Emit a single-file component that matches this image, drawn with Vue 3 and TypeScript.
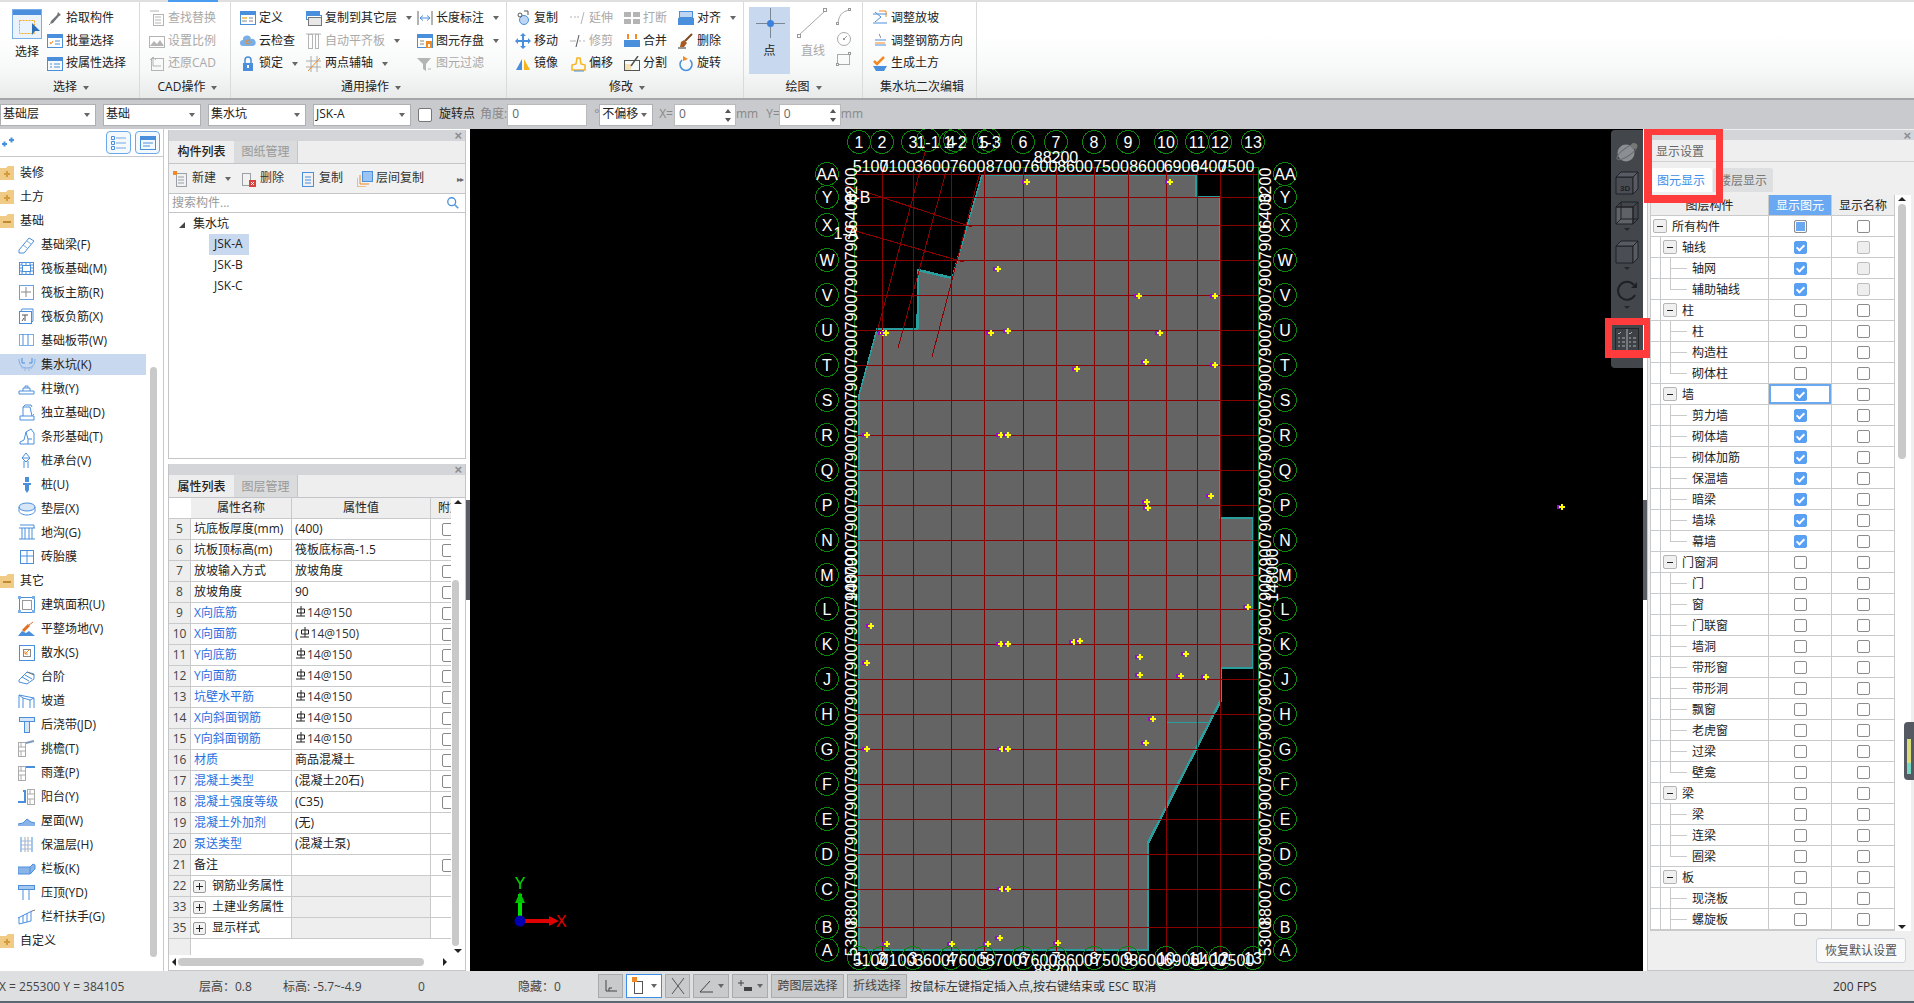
<script setup lang="ts">
const B = '#4a8fdc'
const G = '#b4b4b4'
const O = '#f08a24'
const s = (d: string, c = B, w = 1) => `<path d="${d}" fill="none" stroke="${c}" stroke-width="${w}"/>`
const f = (d: string, c = B) => `<path d="${d}" fill="${c}"/>`
const box = (x: number, y: number, w: number, h: number, c = B, fill = 'none') =>
  `<rect x="${x}.5" y="${y}.5" width="${w}" height="${h}" fill="${fill}" stroke="${c}"/>`

const icons: Record<string, string> = {
  pick: f('M11 2l3 3-2 1-6 7-3 1 1-3 6-6z', '#707478') + s('M3 14l-1 1', '#4a8fdc'),
  batch: box(0, 1, 15, 13) + f('M1 2h14v3H1z') + s('M3 9l1 2 2-3', O) + s('M8 8h5M8 11h5'),
  attr: box(0, 1, 15, 13) + f('M1 2h14v3H1z') + s('M3 8h2M7 8h6M3 11h2M7 11h6'),
  find: box(4, 4, 10, 11, G) + s('M6 7h6M6 10h6M6 13h6M1 1h9', G),
  scale: f('M1 13l4-5 3 3 3-4 4 6z', G) + box(0, 3, 15, 11, G),
  restore: box(2, 2, 12, 12, G) + s('M1 4l3-3 3 3M4 1v9h8', G),
  define: box(0, 1, 15, 13) + f('M1 2h14v3H1z') + f('M2 7h5v2H2z', '#f5c56a') + s('M9 8h4M9 11h4M2 11h5', '#888'),
  cloud: f('M3 13a3 3 0 010-6 4 4 0 018-1 3.500 3.500 0 012 7z', '#7aaee6') + `<circle cx="8" cy="9" r="2" fill="none" stroke="${O}"/>`,
  lock: s('M5 7V4a3 3 0 016 0v3', B, 1.5) + f('M3 7h10v8H3z') + f('M7 9h2v3H7z', '#fff'),
  copyto: f('M0 1h14v4H0z') + box(0, 5, 15, 4) + box(2, 7, 13, 8, '#777', '#e8e8e8'),
  align: box(2, 1, 4, 14, G) + box(9, 1, 3, 14, G) + s('M0 1h15', G),
  twopoint: s('M0 5h15M0 11h15M5 0v16M11 0v16', '#aaa') + s('M2 15L14 2', O),
  dim: s('M1 1v14M15 1v14', '#666') + s('M3 8h10M3 8l3-2.500M3 8l3 2.500M13 8l-3-2.500M13 8l-3 2.500', B),
  save: box(0, 1, 15, 13) + f('M1 2h14v3H1z') + s('M3 8h4M3 11h4', '#888') + f('M9 8h6v7H9z', O) + f('M11 11h2v3h-2z', '#fff'),
  filter: f('M0 2h14L9 8v7l-3-2V8z', G) + s('M11 13h3', G),
  copy: `<circle cx="9" cy="10" r="4.500" fill="#bcd6f3" stroke="${B}"/><circle cx="5" cy="5" r="2" fill="none" stroke="#555"/>` + s('M9 1h4v4', '#555'),
  move: s('M8 2v12M2 8h12', B, 2) + f('M8 0l3 3H5zM8 16l3-3H5zM0 8l3-3v6zM16 8l-3-3v6z'),
  mirror: f('M1 14L7 3v11z') + f('M9 3l6 11H9z', '#f6b51e'),
  extend: s('M0 7h2M4 7h2M7 7h2M14 2l-3 12', G),
  trim: s('M0 8h6', G) + s('M9 8h2M13 8h2', G) + s('M9 2L6 14', '#555'),
  offset: s('M2 14V9l4-1 1-6h3l1 6 4 1v5z', '#f6b51e', 1.5) + s('M4 15h10', B),
  break: f('M0 2h7v5H0zM9 2h7v5H9zM0 9h7v5H0zM9 9h7v5H9z', G),
  merge: f('M0 7h16v7H0z', B) + f('M3 1h2v5H3zM11 1h2v5h-2z', O),
  split: box(0, 4, 15, 10, '#555') + f('M1 8h6v6H1z', '#f6e2b8') + s('M14 0L7 10', '#555', 1.5),
  alignr: box(1, 1, 13, 6, B, '#bcd6f3') + f('M0 8h16v7H0z'),
  del: s('M14 1L7 8', '#7a4a20', 2) + f('M3 9l3-2 3 3-3 4H2z', '#a85a22') + s('M0 15h8', '#333'),
  rotate: `<path d="M12 4a6 6 0 11-8 0" fill="none" stroke="${B}" stroke-width="1.500"/>` + f('M5 0l5 3-5 2z', O),
  slope: s('M1 4h14M1 13h14', B) + s('M3 2l6 5-6 5', B) + s('M7 1h7v6', O),
  direction: s('M3 7h11M3 12h11', B) + s('M8 1c-2 1 2 3 0 4', '#777') + s('M3 10h10', O),
  earth: s('M2 5l3 3 7-7', O, 2.5) + f('M1 10h14l-3 5H4z', B),
  newdoc: box(3, 2, 10, 13, '#9aa0a6') + s('M5 6h6M5 9h6M5 12h6', '#9aa0a6') + f('M0 0h4v4H0z', O),
  delete: box(1, 2, 8, 12, '#9aa0a6') + f('M8 9h7v7H8z', '#d8443c') + s('M10 11l3 3M13 11l-3 3', '#fff'),
  copydoc: box(2, 1, 11, 14) + s('M5 6h6M5 9h6M5 12h6'),
  floorcopy: f('M6 0h10v10H6z', '#9cc4f2') + box(5, 0, 10, 10) + s('M3 4v9h9M0 7v9h9', O),
  search: `<circle cx="6.500" cy="6.500" r="4.500" fill="none" stroke="${B}" stroke-width="1.500"/>` + s('M10 10l4 4', '#5aa0e0', 2),
  beam: s('M1 14L11 2l5 3L6 17H1z') + s('M5 9l4 3M9 5l4 3', '#7aaee6'),
  raft: box(1, 2, 14, 12) + box(4, 5, 8, 6) + s('M1 5h3M1 8h3M1 11h3M12 5h3M12 8h3M12 11h3M4 2v3M8 2v3M12 2v3M4 11v3M8 11v3M12 11v3'),
  main: box(1, 1, 14, 14, '#6aa0dc') + s('M8 3v10M3 8h10', '#888'),
  neg: box(1, 3, 12, 12) + s('M3 3l1-2h11v12l-2 2') + s('M4 7h6M7 7v6M4 13l2-3', '#555'),
  strip: box(1, 2, 14, 11, '#7aaee6') + s('M5 2v11M10 2v11', B),
  pit: s('M1 3c0 6 3 9 8 9s8-3 8-9', '#7aaee6') + s('M4 2v5h3M14 2v5h-3') + s('M3 10l2 3M7 12v3M11 12v3M15 10l-2 3', '#9db9dc'),
  pier: s('M1 14h15v-3H1zM5 11V8h7v3') + s('M7 8V6h3v2'),
  ind: s('M2 16v-4h14v4zM5 12V3h7l2 9M5 3l2-2h6l1 2') + s('M14 12l2-2', '#6aa0dc'),
  stripf: s('M2 16h14V5l-3-4-5 3-2 8-4 2zM8 4l2 7h4') + s('M10 11v5'),
  cap: s('M8 1l4 5-4 4-4-4zM6 9v7M10 9v7M4 6h8'),
  pile: f('M7 1h4v5H7zM5 7h8v2H5zM7 9h4v5l-2 3-2-3z'),
  pad: `<ellipse cx="9" cy="7" rx="8" ry="4" fill="#d7e6f7" stroke="${B}"/>` + s('M1 7v4c0 2 4 4 8 4s8-2 8-4V7'),
  ditch: s('M1 4h16M2 1h14v3M4 4v11M14 4v11M7 4v11M11 4v11M1 15h16'),
  brick: box(2, 2, 13, 13) + s('M9 2v13M2 8h13'),
  area: box(1, 1, 15, 15) + box(4, 4, 9, 9, '#999') + f('M0 0h3v3H0zM14 0h3v3h-3zM0 14h3v3H0zM14 14h3v3h-3z', '#7aaee6'),
  level: f('M0 16l4-5 4 2 3-2 6 5z') + s('M5 11l6-6', '#e0701f', 3) + s('M11 5l4-3', '#e0701f'),
  apron: box(1, 1, 15, 15) + box(5, 5, 7, 7, '#888') + s('M11 6l-4 4M7 7v3h3', O),
  step: s('M1 12l8-8 7 2v5l-7 5-8-2zM4 9l7 4M7 7l7 4') + s('M9 4l7 3', '#777'),
  ramp: s('M1 16V3l15 3v10M5 16V6l7 2v8M1 3l4 3M16 6l-4 2'),
  post: box(1, 1, 15, 4, B, '#d7e6f7') + box(6, 5, 5, 11, B, '#d7e6f7'),
  eave: box(0, 2, 7, 14, '#aaa') + s('M0 7h7M0 11h7M3 2v5M3 11v5', '#aaa') + s('M8 3l8-2', '#7a9bc0', 2),
  canopy: box(0, 2, 7, 14, '#aaa') + s('M0 7h7M0 11h7M3 2v5M3 11v5', '#aaa') + s('M8 3h9', B, 2),
  balcony: box(9, 1, 7, 15, '#aaa') + s('M9 6h7M9 11h7M12 1v5M12 11v5', '#aaa') + s('M0 14h8M7 3v11M5 3h3', B, 2),
  roof: f('M0 12l5-1 4-4 4 3 4 1v3H0z', '#8ab4e8') + s('M0 12l5-1 4-4 4 3 4 1'),
  insulate: s('M3 1v15M14 1v15', B) + s('M7 1v15M10 1v15', '#aaa') + s('M3 5h11M3 9h11M3 13h11', '#9db9dc'),
  board: f('M0 7h12l3-3 2 1v4l-4 5H0z', '#8ab4e8') + s('M0 7h12v7H0zM12 7l3-3 2 1v4l-5 5'),
  coping: box(0, 1, 16, 4, B, '#a6c8ef') + s('M5 5v11M11 5v11'),
  rail: s('M0 10l14-7M1 16V9M5 15V7M9 14V5M13 13V3M1 16l12-3') + s('M14 3l3-1', '#777'),
}

const ribbon = [
  {
    label: '选择', caret: true, w: 140, pad: 7,
    cols: [
      { w: 40, big: { icon: 'select', text: '选择', active: false } },
      { w: 92, items: [{ icon: 'pick', text: '拾取构件' }, { icon: 'batch', text: '批量选择' }, { icon: 'attr', text: '按属性选择' }] },
    ],
  },
  {
    label: 'CAD操作', caret: true, w: 91, pad: 9,
    cols: [{ w: 80, items: [{ icon: 'find', text: '查找替换', off: true }, { icon: 'scale', text: '设置比例', off: true }, { icon: 'restore', text: '还原CAD', off: true }] }],
  },
  {
    label: '通用操作', caret: true, w: 276, pad: 9,
    cols: [
      { w: 66, items: [{ icon: 'define', text: '定义' }, { icon: 'cloud', text: '云检查' }, { icon: 'lock', text: '锁定', arrow: true }] },
      { w: 111, items: [{ icon: 'copyto', text: '复制到其它层', arrow: true }, { icon: 'align', text: '自动平齐板', off: true, arrow: true }, { icon: 'twopoint', text: '两点辅轴', arrow: true }] },
      { w: 89, items: [{ icon: 'dim', text: '长度标注', arrow: true }, { icon: 'save', text: '图元存盘', arrow: true }, { icon: 'filter', text: '图元过滤', off: true }] },
    ],
  },
  {
    label: '修改', caret: true, w: 237, pad: 8,
    cols: [
      { w: 55, items: [{ icon: 'copy', text: '复制' }, { icon: 'move', text: '移动' }, { icon: 'mirror', text: '镜像' }] },
      { w: 54, items: [{ icon: 'extend', text: '延伸', off: true }, { icon: 'trim', text: '修剪', off: true }, { icon: 'offset', text: '偏移' }] },
      { w: 54, items: [{ icon: 'break', text: '打断', off: true }, { icon: 'merge', text: '合并' }, { icon: 'split', text: '分割' }] },
      { w: 65, items: [{ icon: 'alignr', text: '对齐', arrow: true }, { icon: 'del', text: '删除' }, { icon: 'rotate', text: '旋转' }] },
    ],
  },
  {
    label: '绘图', caret: true, w: 119, pad: 5,
    cols: [
      { w: 41, big: { icon: 'point', text: '点', active: true } },
      { w: 46, big: { icon: 'line', text: '直线', active: false, off: true } },
      { w: 22, minis: ['arc', 'circle', 'rect'] },
    ],
  },
  {
    label: '集水坑二次编辑', caret: false, w: 114, pad: 9,
    cols: [{ w: 104, items: [{ icon: 'slope', text: '调整放坡' }, { icon: 'direction', text: '调整钢筋方向' }, { icon: 'earth', text: '生成土方' }] }],
  },
]

const selects = [
  { text: '基础层', w: 96 },
  { text: '基础', w: 98 },
  { text: '集水坑', w: 98 },
  { text: 'JSK-A', w: 98 },
]

const nav = [
  { t: '装修', folder: 'plus' },
  { t: '土方', folder: 'plus' },
  { t: '基础', folder: 'minus' },
  { t: '基础梁(F)', i: 'beam' },
  { t: '筏板基础(M)', i: 'raft' },
  { t: '筏板主筋(R)', i: 'main' },
  { t: '筏板负筋(X)', i: 'neg' },
  { t: '基础板带(W)', i: 'strip' },
  { t: '集水坑(K)', i: 'pit', sel: true },
  { t: '柱墩(Y)', i: 'pier' },
  { t: '独立基础(D)', i: 'ind' },
  { t: '条形基础(T)', i: 'stripf' },
  { t: '桩承台(V)', i: 'cap' },
  { t: '桩(U)', i: 'pile' },
  { t: '垫层(X)', i: 'pad' },
  { t: '地沟(G)', i: 'ditch' },
  { t: '砖胎膜', i: 'brick' },
  { t: '其它', folder: 'minus' },
  { t: '建筑面积(U)', i: 'area' },
  { t: '平整场地(V)', i: 'level' },
  { t: '散水(S)', i: 'apron' },
  { t: '台阶', i: 'step' },
  { t: '坡道', i: 'ramp' },
  { t: '后浇带(JD)', i: 'post' },
  { t: '挑檐(T)', i: 'eave' },
  { t: '雨蓬(P)', i: 'canopy' },
  { t: '阳台(Y)', i: 'balcony' },
  { t: '屋面(W)', i: 'roof' },
  { t: '保温层(H)', i: 'insulate' },
  { t: '栏板(K)', i: 'board' },
  { t: '压顶(YD)', i: 'coping' },
  { t: '栏杆扶手(G)', i: 'rail' },
  { t: '自定义', folder: 'plus' },
]

const props = [
  { n: 5, k: '坑底板厚度(mm)', v: '(400)', c: true },
  { n: 6, k: '坑板顶标高(m)', v: '筏板底标高-1.5', c: true },
  { n: 7, k: '放坡输入方式', v: '放坡角度', c: true },
  { n: 8, k: '放坡角度', v: '90', c: true },
  { n: 9, k: 'X向底筋', v: '14@150', c: true, blue: true, bar: true },
  { n: 10, k: 'X向面筋', v: '14@150)', c: true, blue: true, bar: true, open: true },
  { n: 11, k: 'Y向底筋', v: '14@150', c: true, blue: true, bar: true },
  { n: 12, k: 'Y向面筋', v: '14@150', c: true, blue: true, bar: true },
  { n: 13, k: '坑壁水平筋', v: '14@150', c: true, blue: true, bar: true },
  { n: 14, k: 'X向斜面钢筋', v: '14@150', c: true, blue: true, bar: true },
  { n: 15, k: 'Y向斜面钢筋', v: '14@150', c: true, blue: true, bar: true },
  { n: 16, k: '材质', v: '商品混凝土', c: true, blue: true },
  { n: 17, k: '混凝土类型', v: '(混凝土20石)', c: true, blue: true },
  { n: 18, k: '混凝土强度等级', v: '(C35)', c: true, blue: true },
  { n: 19, k: '混凝土外加剂', v: '(无)', blue: true },
  { n: 20, k: '泵送类型', v: '(混凝土泵)', blue: true },
  { n: 21, k: '备注', v: '', c: true },
  { n: 22, k: '钢筋业务属性', v: '', group: true },
  { n: 33, k: '土建业务属性', v: '', group: true },
  { n: 35, k: '显示样式', v: '', group: true },
]

type Layer = { t: string; lv: number; on?: string; dis?: boolean; last?: boolean }
const leaf = (t: string, on?: string, dis?: boolean, last?: boolean): Layer => ({ t, lv: 2, on, dis, last })
const layers: Layer[] = [
  { t: '所有构件', lv: 0, on: 'part' },
  { t: '轴线', lv: 1, on: 'yes', dis: true },
  leaf('轴网', 'yes', true),
  leaf('辅助轴线', 'yes', true, true),
  { t: '柱', lv: 1 },
  leaf('柱'),
  leaf('构造柱'),
  leaf('砌体柱', undefined, false, true),
  { t: '墙', lv: 1, on: 'focus' },
  ...['剪力墙', '砌体墙', '砌体加筋', '保温墙', '暗梁', '墙垛'].map((t) => leaf(t, 'yes')),
  leaf('幕墙', 'yes', false, true),
  { t: '门窗洞', lv: 1 },
  ...['门', '窗', '门联窗', '墙洞', '带形窗', '带形洞', '飘窗', '老虎窗', '过梁'].map((t) => leaf(t)),
  leaf('壁龛', undefined, false, true),
  { t: '梁', lv: 1 },
  leaf('梁'),
  leaf('连梁'),
  leaf('圈梁', undefined, false, true),
  { t: '板', lv: 1 },
  leaf('现浇板'),
  leaf('螺旋板'),
]

const xLines = [859, 882, 913, 951, 984, 1023, 1056, 1094, 1128, 1166, 1197, 1220, 1253]
const xNames = ['1', '2', '3', '4', '5', '6', '7', '8', '9', '10', '11', '12', '13']
const xDims = ['5100', '7100', '3600', '7600', '8700', '7600', '8600', '7500', '8600', '6900', '6400', '7500']
const yRows: [string, number][] = [
  ['AA', 174], ['Y', 197], ['X', 225], ['W', 260], ['V', 295], ['U', 330], ['T', 365], ['S', 400], ['R', 435], ['Q', 470],
  ['P', 505], ['N', 540], ['M', 575], ['L', 609], ['K', 644], ['J', 679], ['H', 714], ['G', 749], ['F', 784], ['E', 819],
  ['D', 854], ['C', 889], ['B', 927], ['A', 950],
]
const yDims = yRows.slice(0, -1).map((r, i) => ({
  y: (r[1] + yRows[i + 1][1]) / 2,
  t: i === 0 ? '3200' : i === 1 ? '6400' : i === yRows.length - 2 ? '5300' : i === yRows.length - 3 ? '8800' : '7900',
}))
const midDims = xLines.slice(0, -1).map((x, i) => ({ x: (x + xLines[i + 1]) / 2, t: xDims[i] }))
const slabOutline = '982,175 1196,175 1196,197 1220,197 1220,518 1253,518 1253,668 1221,668 1221,700 1148,843 1148,950 859,950 859,395 877,329 917,329 918,270 952,278'
const extraCircles: [number, string][] = [[928, '1-1'], [955, '1-2'], [989, '1-3']]
const marks = [
  [1026, 182], [1169, 182], [997, 269], [1138, 296], [1214, 296], [882, 333], [885, 333], [990, 333], [1007, 331], [1159, 333],
  [1145, 362], [1214, 365], [1076, 369], [866, 435], [1000, 435], [1007, 435], [1146, 502], [1147, 508], [1210, 496], [1247, 607],
  [870, 626], [1000, 644], [1007, 644], [1073, 642], [1079, 641], [866, 663], [1139, 657], [1185, 654], [1139, 675], [1180, 676],
  [1205, 677], [1152, 719], [1145, 743], [866, 749], [1001, 749], [1007, 749], [1001, 889], [1007, 889], [886, 944], [951, 944],
  [987, 944], [999, 938], [1057, 943], [1561, 507],
]
const viewIcons = ['sphere', 'cube3d', 'wire', 'solid', 'orbit']
</script>

<template>
  <div class="app">
    <header class="ribbon">
      <span class="tab-mark"></span>
      <section v-for="g in ribbon" :key="g.label" class="group" :style="{ width: g.w + 'px', paddingLeft: g.pad + 'px' }">
        <div class="group-body">
          <div v-for="(col, ci) in g.cols" :key="ci" class="col" :style="{ width: col.w + 'px' }">
            <div v-if="col.big" class="big" :class="{ active: col.big.active, off: col.big.off }">
              <svg v-if="col.big.icon === 'select'" class="big-icon sel-icon" width="30" height="30" viewBox="0 0 30 30">
                <rect x="0.500" y="0.500" width="29" height="29" fill="#eaf2fb" stroke="#7aaee6" />
                <rect x="1" y="1" width="28" height="5" fill="#4a8fdc" />
                <rect x="7.500" y="11.500" width="15" height="13" fill="none" stroke="#f6a81e" stroke-dasharray="2 1" />
                <path d="M20 14l8 8h-5l-3 4z" fill="#2f6fb5" />
              </svg>
              <svg v-else-if="col.big.icon === 'point'" class="big-icon" width="34" height="32" viewBox="0 0 34 32">
                <path d="M17.500 1v30M3 16.500h29" stroke="#7c8794" fill="none" />
                <circle cx="17.500" cy="16.500" r="3.500" fill="#3c82dc" />
              </svg>
              <svg v-else class="big-icon" width="34" height="32" viewBox="0 0 34 32">
                <path d="M3 28L29 4" stroke="#a9a9a9" fill="none" />
                <rect x="1.500" y="27.500" width="3" height="3" fill="#fff" stroke="#999" />
                <rect x="27.500" y="1.500" width="3" height="3" fill="#fff" stroke="#999" />
              </svg>
              <span>{{ col.big.text }}</span>
            </div>
            <div v-else-if="col.minis" class="minis">
              <svg width="16" height="18" viewBox="0 0 16 18"><path d="M2 17C2 8 6 3 14 2" fill="none" stroke="#aaa" /><rect x="0.500" y="14.500" width="2" height="2" fill="#fff" stroke="#999" /><rect x="12.500" y="0.500" width="2" height="2" fill="#fff" stroke="#999" /></svg>
              <svg width="16" height="16" viewBox="0 0 16 16"><circle cx="8" cy="8" r="6.500" fill="none" stroke="#aaa" /><path d="M8 8l3-3" stroke="#999" /><rect x="7" y="7" width="2" height="2" fill="#999" /></svg>
              <svg width="16" height="14" viewBox="0 0 16 14"><rect x="1.500" y="2.500" width="12" height="10" fill="none" stroke="#aaa" /><rect x="0.500" y="11.500" width="2" height="2" fill="#fff" stroke="#999" /><rect x="12.500" y="0.500" width="2" height="2" fill="#fff" stroke="#999" /></svg>
            </div>
            <template v-else>
              <div v-for="it in col.items" :key="it.text" class="rb-item" :class="{ off: it.off }">
                <svg width="16" height="16" viewBox="0 0 16 16" v-html="icons[it.icon]"></svg>
                <span>{{ it.text }}</span>
                <i v-if="it.arrow" class="caret"></i>
              </div>
            </template>
          </div>
        </div>
        <div class="group-label">{{ g.label }}<i v-if="g.caret" class="caret"></i></div>
      </section>
    </header>

    <div class="optbar">
      <div v-for="sel in selects" :key="sel.w + sel.text" class="select" :style="{ width: sel.w + 'px' }">
        <span>{{ sel.text }}</span><i class="caret"></i>
      </div>
      <span class="chk"></span>
      <span class="opt-on">旋转点</span>
      <span class="opt-off angle">角度:</span>
      <span class="input angle-in">0</span>
      <span class="opt-off deg">°</span>
      <div class="select offset-sel"><span>不偏移</span><i class="caret"></i></div>
      <span class="opt-off xl">X=</span>
      <span class="input spin">0<b class="spinner"></b></span>
      <span class="opt-off">mm</span>
      <span class="opt-off yl">Y=</span>
      <span class="input spin">0<b class="spinner"></b></span>
      <span class="opt-off">mm</span>
    </div>

    <main class="main">
      <aside class="nav">
        <div class="nav-head">
          <svg class="nav-star" width="14" height="12" viewBox="0 0 14 12">
            <path d="M1 7h5M3.500 4.500v5M8 3h5M10.500 0.500v5" stroke="#4a8fdc" stroke-width="2" fill="none" />
          </svg>
          <span class="nav-btn">
            <svg width="16" height="14" viewBox="0 0 16 14"><path d="M5 2h10M5 7h10M5 12h10" stroke="#7aa7dc" fill="none" /><path d="M0.500 0.500h3v3h-3zM0.500 5.500h3v3h-3zM0.500 10.500h3v3h-3z" stroke="#4a8fdc" fill="none" /></svg>
          </span>
          <span class="nav-btn">
            <svg width="16" height="14" viewBox="0 0 16 14"><rect x="0.500" y="0.500" width="15" height="13" fill="none" stroke="#4a8fdc" /><rect x="1" y="1" width="14" height="3" fill="#4a8fdc" /><path d="M3 7h10M3 10h7" stroke="#4a8fdc" fill="none" /></svg>
          </span>
        </div>
        <div class="nav-body">
          <ul class="nav-list">
            <li v-for="n in nav" :key="n.t" class="nav-row" :class="{ sel: n.sel, top: n.folder }">
              <svg v-if="n.folder" class="folder" width="15" height="14" viewBox="0 0 15 14">
                <path d="M0 2h6l2-2h6v14H0z" fill="#efcb86" />
                <path v-if="n.folder === 'plus'" d="M7 5v6M4 8h6" stroke="#d49a3c" stroke-width="2" fill="none" />
                <path v-else d="M3 8h8" stroke="#c28a30" stroke-width="2" fill="none" />
              </svg>
              <svg v-else width="18" height="18" viewBox="0 0 18 18" v-html="icons[n.i as string]"></svg>
              <span>{{ n.t }}</span>
            </li>
          </ul>
          <span class="nav-scroll"></span>
        </div>
      </aside>

      <div class="mid">
        <section class="panel list-panel">
          <div class="strip"><span class="close">×</span></div>
          <div class="tabs"><span class="tab active">构件列表</span><span class="tab">图纸管理</span></div>
          <div class="tools">
            <span class="tool t1"><svg width="16" height="16" viewBox="0 0 16 16" v-html="icons.newdoc"></svg>新建<i class="caret"></i></span>
            <span class="tool t2"><svg width="16" height="16" viewBox="0 0 16 16" v-html="icons.delete"></svg>删除</span>
            <span class="tool t3"><svg width="16" height="16" viewBox="0 0 16 16" v-html="icons.copydoc"></svg>复制</span>
            <span class="tool t4"><svg width="16" height="16" viewBox="0 0 16 16" v-html="icons.floorcopy"></svg>层间复制</span>
            <span class="more">▸▸</span>
          </div>
          <div class="search">
            <span>搜索构件...</span>
            <svg width="14" height="14" viewBox="0 0 16 16" v-html="icons.search"></svg>
          </div>
          <div class="tree">
            <div class="tree-root"><i class="tri"></i>集水坑</div>
            <div class="tree-leaf"><span class="on">JSK-A</span></div>
            <div class="tree-leaf"><span>JSK-B</span></div>
            <div class="tree-leaf"><span>JSK-C</span></div>
          </div>
        </section>

        <section class="panel prop-panel">
          <div class="strip"><span class="close">×</span></div>
          <div class="tabs"><span class="tab active">属性列表</span><span class="tab">图层管理</span></div>
          <div class="prop-wrap">
            <div class="prop-table">
              <div class="pr head">
                <span class="pn blank"></span><span class="pk">属性名称</span><span class="pv">属性值</span><span class="pa">附加</span>
              </div>
              <div v-for="p in props" :key="p.n" class="pr">
                <span class="pn">{{ p.n }}</span>
                <span class="pk" :class="{ blue: p.blue }">
                  <b v-if="p.group" class="plus"></b>{{ p.k }}
                </span>
                <span class="pv" :class="{ grp: p.group, rebar: p.bar }">
                  <template v-if="p.open">(</template>
                  <svg v-if="p.bar" class="bar-mark" width="10" height="11" viewBox="0 0 10 11"><path d="M5 0v10M1.500 3h7v4h-7zM0 10h9" fill="none" stroke="#222" /></svg>{{ p.v }}
                </span>
                <span class="pa"><i v-if="p.c" class="pa-box"></i></span>
              </div>
              <div class="pr filler"><span class="pn"></span></div>
            </div>
            <div class="vbar"><i class="up"></i><b class="knob"></b><i class="down"></i></div>
          </div>
          <div class="hbar"><i class="lf"></i><b class="hknob"></b><i class="rt"></i></div>
        </section>
      </div>

      <span class="splitter"><i></i></span>

      <div class="canvas">
        <svg class="cad" width="1173" height="842" viewBox="470 129 1173 842">
          <g shape-rendering="crispEdges">
            <polygon :points="slabOutline" fill="#646464" />
            <polygon :points="slabOutline" fill="none" stroke="#2a9d9d" stroke-width="1.500" />
            <path d="M918 329V270L952 278M1220 518H1253M1148 950V843L1221 700" stroke="#2a9d9d" stroke-width="2.500" fill="none" />
            <path d="M1167 722h41" stroke="#2a9d9d" fill="none" />
            <path d="M854 167V955M1258 167V955M855 167H1258" stroke="#0a7a0a" fill="none" />
            <line v-for="x in xLines.slice(1)" :key="'v' + x" :x1="x" y1="167" :x2="x" y2="952" stroke="#8b0000" />
            <line v-for="r in yRows.slice(0, -1)" :key="'h' + r[0]" x1="855" :y1="r[1]" x2="1258" :y2="r[1]" stroke="#8b0000" />
            <path d="M925 152L877 332M947 168L898 348M980 172L932 357M845 185L972 227M845 228L964 262" stroke="#8b0000" fill="none" />
            <g fill="none" stroke="#0a860a">
              <circle v-for="(x, i) in xLines" :key="'tc' + i" :cx="x" cy="142" r="11.500" />
              <circle v-for="(x, i) in xLines" :key="'bc' + i" :cx="x" cy="958" r="11.500" />
              <circle v-for="c in extraCircles" :key="'ec' + c[0]" :cx="c[0]" cy="140" r="11.500" />
              <template v-for="r in yRows" :key="'yc' + r[0]">
                <circle cx="827" :cy="r[1]" r="11.500" />
                <circle cx="1285" :cy="r[1]" r="11.500" />
              </template>
            </g>
          </g>
          <g class="cad-text">
            <text v-for="(x, i) in xLines" :key="'tn' + i" :x="x" y="148" text-anchor="middle">{{ xNames[i] }}</text>
            <text v-for="(x, i) in xLines" :key="'bn' + i" :x="x" y="964" text-anchor="middle">{{ xNames[i] }}</text>
            <text v-for="c in extraCircles" :key="'et' + c[0]" :x="c[0]" y="148" text-anchor="middle">{{ c[1] }}</text>
            <text v-for="d in midDims" :key="'td' + d.x" :x="d.x" y="172" text-anchor="middle">{{ d.t }}</text>
            <text v-for="d in midDims" :key="'bd' + d.x" :x="d.x" y="966" text-anchor="middle">{{ d.t }}</text>
            <text x="1056" y="163" text-anchor="middle">88200</text>
            <text x="1056" y="976" text-anchor="middle">88200</text>
            <text x="858" y="203" text-anchor="middle">1-B</text>
            <text x="846" y="239" text-anchor="middle">1-A</text>
            <template v-for="r in yRows" :key="'yt' + r[0]">
              <text x="827" :y="r[1] + 6" text-anchor="middle">{{ r[0] }}</text>
              <text x="1285" :y="r[1] + 6" text-anchor="middle">{{ r[0] }}</text>
            </template>
            <template v-for="d in yDims" :key="'yd' + d.y">
              <text :transform="`translate(857 ${d.y}) rotate(-90)`" text-anchor="middle">{{ d.t }}</text>
              <text :transform="`translate(1271 ${d.y}) rotate(-90)`" text-anchor="middle">{{ d.t }}</text>
            </template>
            <text transform="translate(857 575) rotate(-90)" text-anchor="middle">148000</text>
            <text transform="translate(1278 575) rotate(-90)" text-anchor="middle">148000</text>
          </g>
          <g v-for="(m, i) in marks" :key="'m' + i" shape-rendering="crispEdges">
            <rect :x="m[0] - 4" :y="m[1] - 2" width="3" height="4" fill="#9010c8" />
            <rect :x="m[0] - 2" :y="m[1] - 1" width="6" height="2" fill="#ffff00" />
            <rect :x="m[0]" :y="m[1] - 3" width="2" height="6" fill="#ffff00" />
          </g>
          <g>
            <path d="M520 921V894" stroke="#00e000" stroke-width="4" fill="none" />
            <path d="M520 892l-5 11h10z" fill="#00c000" />
            <path d="M520 921h30" stroke="#e00000" stroke-width="4" fill="none" />
            <path d="M549 916l10 5-10 5z" fill="#e00000" />
            <circle cx="520" cy="921" r="5.500" fill="#0000b0" />
            <text x="520" y="889" class="ax" fill="#00e000" text-anchor="middle">Y</text>
            <text x="556" y="927" class="ax" fill="#e00000">X</text>
          </g>
        </svg>
        <div class="view-bar">
          <span v-for="v in viewIcons" :key="v" class="view-btn" :class="v">
            <svg v-if="v === 'sphere'" width="26" height="26" viewBox="0 0 26 26">
              <circle cx="12" cy="14" r="8.500" fill="#8b8e92" /><ellipse cx="13" cy="13" rx="12" ry="4" transform="rotate(-35 13 13)" fill="none" stroke="#6b6e72" /><circle cx="20" cy="7" r="3" fill="#777" />
            </svg>
            <svg v-else width="26" height="26" viewBox="0 0 26 26">
              <path v-if="v === 'orbit'" d="M20 7a9 9 0 101 10" fill="none" stroke="#1e2126" stroke-width="2" />
              <path v-if="v === 'orbit'" d="M23 4v6h-6z" fill="#1e2126" />
              <g v-else>
                <path d="M2 7h17v17H2z" :fill="v === 'wire' ? '#5f6368' : '#4a4e54'" stroke="#1e2126" />
                <path d="M2 7l5-5h17L19 7zM19 7l5-5v17l-5 5z" :fill="v === 'wire' ? 'none' : '#585c62'" stroke="#1e2126" />
                <path v-if="v === 'wire'" d="M7 2v17h17M7 19l-5 5" fill="none" stroke="#1e2126" />
                <text v-if="v === 'cube3d'" x="6" y="21" class="cube-label">3D</text>
              </g>
            </svg>
            <i v-if="v === 'wire' || v === 'solid' || v === 'orbit'" class="view-caret"></i>
          </span>
          <span class="view-list">
            <svg width="24" height="24" viewBox="0 0 24 24"><rect x="0.500" y="0.500" width="23" height="23" fill="#3e4247" stroke="#23262a" /><path d="M12 1v22M3 5l1 1 2-2M14 5l1 1 2-2M3 10h2M7 10h3M14 10h2M18 10h3M3 14h2M7 14h3M14 14h2M18 14h3M3 18h2M7 18h3M14 18h2M18 18h3" fill="none" stroke="#aab0b6" /></svg>
          </span>
        </div>
      </div>

      <span class="splitter"><i></i></span>

      <aside class="side">
        <div class="side-strip"><span class="close">×</span></div>
        <div class="side-title">显示设置</div>
        <div class="side-tabs"><span class="stab active">图元显示</span><span class="stab">楼层显示</span></div>
        <div class="layer-wrap">
          <div class="layer-table">
            <div class="lr lhead">
              <span class="lc-name center">图层构件</span>
              <span class="lc act">显示图元</span>
              <span class="lc">显示名称</span>
            </div>
            <div v-for="(l, i) in layers" :key="i + l.t" class="lr">
              <span class="lc-name">
                <template v-if="l.lv === 0"><b class="minus m0"></b></template>
                <template v-else-if="l.lv === 1"><i class="g1 short"></i><b class="minus"></b></template>
                <template v-else><i class="g1"></i><i class="g2" :class="{ last: l.last }"></i></template>
                <span class="lname">{{ l.t }}</span>
              </span>
              <span class="lc" :class="{ focus: l.on === 'focus' }">
                <i class="cb" :class="{ yes: l.on === 'yes' || l.on === 'focus', part: l.on === 'part' }"></i>
              </span>
              <span class="lc"><i class="cb" :class="{ dis: l.dis }"></i></span>
            </div>
          </div>
          <div class="side-scroll"><i class="up"></i><b class="sknob"></b><i class="down"></i></div>
        </div>
        <div class="side-foot"><span class="reset">恢复默认设置</span></div>
        <span class="meter"></span>
      </aside>

      <span class="mark mark-side"></span>
      <span class="mark mark-view"></span>
    </main>

    <footer class="status">
      <span class="st s1">X = 255300 Y = 384105</span>
      <span class="st s2">层高：0.8</span>
      <span class="st s3">标高: -5.7~-4.9</span>
      <span class="st s4">0</span>
      <span class="st s5">隐藏：0</span>
      <span class="sbtn w25"><svg width="14" height="14" viewBox="0 0 14 14"><path d="M2 1v11h11M5 12V9h3" fill="none" stroke="#444" /></svg></span>
      <span class="sbtn w36 picked"><svg width="16" height="18" viewBox="0 0 16 18"><rect x="2.500" y="4.500" width="8" height="12" fill="none" stroke="#555" /><rect x="0" y="0" width="5" height="5" fill="#f08a24" /></svg><i class="caret"></i></span>
      <span class="sbtn w25"><svg width="16" height="18" viewBox="0 0 16 18"><path d="M2 1l12 16M14 1L2 17" fill="none" stroke="#555" /></svg></span>
      <span class="sbtn w36"><svg width="16" height="16" viewBox="0 0 16 16"><path d="M1 14h13M1 14L11 3" fill="none" stroke="#444" /></svg><i class="caret"></i></span>
      <span class="sbtn w36"><svg width="16" height="16" viewBox="0 0 16 16"><path d="M3 2v6M0 5h6" stroke="#444" fill="none" /><rect x="6" y="9" width="8" height="4" fill="#444" /></svg><i class="caret"></i></span>
      <span class="sbtn text w73">跨图层选择</span>
      <span class="sbtn text w60">折线选择</span>
      <span class="st hint">按鼠标左键指定插入点,按右键结束或 ESC 取消</span>
      <span class="st fps">200 FPS</span>
    </footer>
  </div>
</template>

<style scoped>
.app {
  position: relative;
  width: 1914px;
  height: 1003px;
  overflow: hidden;
  display: flex;
  flex-direction: column;
  font: 12px/1.2 'Open Sans', 'Noto Sans CJK SC', sans-serif;
  color: #222;
  background: #fff;
}

/* ribbon */
.ribbon {
  position: relative;
  display: flex;
  height: 100px;
  flex: none;
  box-sizing: border-box;
  border-top: 2px solid #dfdfdf;
  border-bottom: 2px solid #a4a6aa;
  background: linear-gradient(#fff 35%, #f7f8f8 70%, #e9eaea);
}
.tab-mark {
  position: absolute;
  left: 168px;
  top: -2px;
  width: 50px;
  height: 2px;
  background: #4a9cf0;
}
.group {
  position: relative;
  box-sizing: border-box;
  flex: none;
  height: 96px;
  border-right: 1px solid #d9dadb;
}
.group-body {
  display: flex;
  height: 73px;
  padding-top: 5px;
  box-sizing: border-box;
}
.col {
  flex: none;
  display: flex;
  flex-direction: column;
}
.rb-item {
  display: flex;
  align-items: center;
  height: 23px;
  gap: 3px;
  white-space: nowrap;
}
.rb-item svg {
  flex: none;
}
.rb-item.off,
.big.off {
  color: #a9a9a9;
}
.caret {
  display: inline-block;
  width: 0;
  height: 0;
  margin-left: 6px;
  border: 3px solid transparent;
  border-top: 4px solid #666;
  border-bottom: 0;
}
.big {
  display: flex;
  flex-direction: column;
  align-items: center;
  height: 67px;
  box-sizing: border-box;
}
.big span {
  margin-top: 5px;
}
.big-icon {
  flex: none;
}
.sel-icon {
  margin: 2px 0 1px;
}
.big.active {
  background: #c7d8ef;
}
.minis {
  display: flex;
  flex-direction: column;
  gap: 5px;
  padding-top: 1px;
}
.group-label {
  display: flex;
  align-items: center;
  justify-content: center;
  height: 23px;
  padding: 2px 4px 0 0;
  box-sizing: border-box;
}

/* option bar */
.optbar {
  flex: none;
  display: flex;
  align-items: center;
  height: 29px;
  box-sizing: border-box;
  background: #c8cacd;
  gap: 7px;
}
.select {
  display: flex;
  flex: none;
  align-items: center;
  justify-content: space-between;
  height: 22px;
  box-sizing: border-box;
  padding: 0 5px 0 2px;
  background: #fff;
  border: 1px solid #aeb0b4;
}
.select .caret {
  margin: 0;
}
.chk {
  flex: none;
  width: 12px;
  height: 12px;
  background: #fff;
  border: 1px solid #777;
  border-radius: 2px;
}
.opt-on {
  color: #222;
}
.opt-off {
  color: #888;
}
.angle {
  margin-left: -2px;
  margin-right: -7px;
}
.input {
  flex: none;
  position: relative;
  display: flex;
  align-items: center;
  height: 22px;
  box-sizing: border-box;
  padding-left: 4px;
  background: #fff;
  color: #666;
  border: 1px solid #bbb;
}
.angle-in {
  width: 80px;
}
.deg {
  width: 3px;
  margin-right: -5px;
}
.offset-sel {
  width: 54px;
}
.xl {
  margin-right: -6px;
  margin-left: -1px;
}
.yl {
  margin-right: -8px;
  margin-left: 1px;
}
.spin {
  width: 62px;
  margin-right: -7px;
}
.spinner {
  position: absolute;
  right: 4px;
  top: 4px;
  width: 0;
  height: 0;
  border: 3px solid transparent;
  border-bottom: 4px solid #555;
  border-top: 0;
}
.spinner::after {
  content: '';
  position: absolute;
  left: -3px;
  top: 9px;
  border: 3px solid transparent;
  border-top: 4px solid #555;
  border-bottom: 0;
}

/* main */
.main {
  position: relative;
  flex: none;
  display: flex;
  height: 842px;
  background: #fff;
}

.nav {
  flex: none;
  width: 164px;
  box-sizing: border-box;
  border-right: 1px solid #c8c9cb;
  display: flex;
  flex-direction: column;
  margin-right: 4px;
}
.nav-head {
  flex: none;
  height: 28px;
  display: flex;
  align-items: center;
  gap: 4px;
  box-sizing: border-box;
  padding: 0 3px 0 1px;
  border-bottom: 1px solid #c8c9cb;
}
.nav-star {
  margin-right: auto;
}
.nav-btn {
  display: flex;
  align-items: center;
  justify-content: center;
  width: 25px;
  height: 23px;
  box-sizing: border-box;
  border: 1px solid #6aa9e8;
  border-radius: 4px;
  background: #f4f9fe;
}
.nav-body {
  flex: 1;
  position: relative;
  display: flex;
}
.nav-list {
  list-style: none;
  margin: 0;
  padding: 4px 0 0;
  width: 150px;
}
.nav-row {
  display: flex;
  align-items: center;
  height: 24px;
  gap: 5px;
  padding-left: 18px;
  box-sizing: border-box;
  width: 146px;
  white-space: nowrap;
}
.nav-row span {
  padding-top: 1px;
}
.nav-row svg {
  flex: none;
}
.nav-row.top {
  padding-left: 0;
  gap: 5px;
}
.nav-row.sel {
  background: linear-gradient(#0000 0 1px, #c7d8ef 1px 22px, #0000 22px);
}
.nav-scroll {
  position: absolute;
  left: 150px;
  top: 210px;
  width: 7px;
  height: 590px;
  border-radius: 4px;
  background: #c9c9c9;
}

.mid {
  flex: none;
  width: 298px;
  display: flex;
  flex-direction: column;
  gap: 5px;
  padding-top: 1px;
  box-sizing: border-box;
}
.panel {
  display: flex;
  flex-direction: column;
  box-sizing: border-box;
  border: 1px solid #c3c5c8;
  border-top: 0;
}
.list-panel {
  height: 329px;
}
.prop-panel {
  flex: 1;
}
.strip {
  flex: none;
  height: 11px;
  display: flex;
  justify-content: flex-end;
  background: #d3d5d9;
  padding-right: 3px;
}
.close {
  font: bold 13px/11px 'Liberation Sans', sans-serif;
  color: #8a8d92;
}
.tabs {
  flex: none;
  display: flex;
  height: 22px;
  background: #eeeeee;
  border-bottom: 1px solid #c3c5c8;
}
.tab {
  width: 64px;
  display: flex;
  align-items: center;
  justify-content: center;
  padding-top: 3px;
  box-sizing: border-box;
  color: #999;
  background: #dadbdc;
  border-right: 1px solid #c3c5c8;
}
.list-panel .tab {
  padding-top: 0;
}
.tab.active {
  color: #222;
  background: #eeeeee;
  font-weight: 500;
  border-right: 0;
  width: 65px;
}
.tools {
  flex: none;
  position: relative;
  display: flex;
  align-items: center;
  height: 29px;
  background: #f1f1f1;
  border-bottom: 1px solid #c3c5c8;
  padding-left: 4px;
}
.tool {
  display: inline-flex;
  align-items: center;
  gap: 3px;
  white-space: nowrap;
  color: #333;
}
.t1 {
  width: 68px;
}
.t2 {
  width: 59px;
}
.t3 {
  width: 57px;
}
.more {
  position: absolute;
  right: 2px;
  font-size: 8px;
  letter-spacing: -1px;
  color: #666;
}
.search {
  flex: none;
  display: flex;
  align-items: center;
  justify-content: space-between;
  height: 18px;
  padding: 0 5px 0 3px;
  color: #999;
  border-bottom: 1px solid #c3c5c8;
}
.tree {
  flex: 1;
}
.tree-root {
  display: flex;
  align-items: center;
  height: 21px;
  padding: 2px 0 0 10px;
  box-sizing: border-box;
  gap: 8px;
}
.tri {
  width: 0;
  height: 0;
  border-left: 6px solid transparent;
  border-bottom: 6px solid #444;
}
.tree-leaf {
  display: flex;
  height: 21px;
  padding-left: 40px;
}
.tree-leaf span {
  display: flex;
  align-items: center;
  width: 40px;
  padding-left: 5px;
  box-sizing: border-box;
}
.tree-leaf .on {
  background: #c7d8ef;
}

/* property table */
.prop-wrap {
  flex: none;
  display: flex;
  height: 457px;
}
.prop-table {
  width: 282px;
  overflow: hidden;
}
.pr {
  display: grid;
  grid-template-columns: 22px 101px 139px 20px;
  height: 21px;
  box-sizing: border-box;
  border-bottom: 1px solid #c9cacc;
}
.pr.head {
  height: 21px;
  background: #eeeeee;
  border-bottom: 1px solid #c9cacc;
}
.pr > span {
  display: flex;
  align-items: center;
  box-sizing: border-box;
  padding-top: 1px;
  border-right: 1px solid #c9cacc;
  white-space: nowrap;
  overflow: hidden;
}
.pr > span.pa {
  border-right: 0;
}
.pn {
  justify-content: center;
  background: #eeeeee;
  color: #444;
  font-size: 12px;
}
.pn.blank {
  background: #fff;
  border-right: 0 !important;
}
.pk {
  padding-left: 3px;
}
.pv {
  padding-left: 3px;
}
.head .pk,
.head .pv {
  justify-content: center;
  padding-left: 0;
}
.head .pa {
  padding-left: 7px;
}
.blue {
  color: #2a6ede;
}
.grp {
  background: #eeeeee;
}
.rebar {
  color: #333;
}
.bar-mark {
  flex: none;
  margin: -5px 1px 0 1px;
}
.plus {
  flex: none;
  width: 13px;
  height: 13px;
  margin: 0 6px 0 -1px;
  box-sizing: border-box;
  border: 1px solid #9a9a9a;
  border-radius: 2px;
  background: linear-gradient(#222, #222) center/7px 1px no-repeat, linear-gradient(#222, #222) center/1px 7px no-repeat, #f2f2f2;
}
.pa-box {
  flex: none;
  width: 13px;
  height: 13px;
  margin-left: 11px;
  box-sizing: border-box;
  border: 1px solid #888;
  border-radius: 2px;
}
.filler {
  height: 17px;
  border: 0;
}
.vbar {
  flex: none;
  position: relative;
  width: 14px;
}
.up,
.down {
  position: absolute;
  left: 3px;
  width: 0;
  height: 0;
  border: 4px solid transparent;
}
.up {
  top: 2px;
  border-bottom: 4px solid #222;
  border-top: 0;
}
.down {
  bottom: 2px;
  border-top: 4px solid #222;
  border-bottom: 0;
}
.knob {
  position: absolute;
  left: 1px;
  top: 82px;
  bottom: 9px;
  width: 7px;
  border-radius: 4px;
  background: #c9c9c9;
}
.hbar {
  position: relative;
  flex: 1;
}
.hknob {
  position: absolute;
  left: 9px;
  top: 3px;
  width: 246px;
  height: 8px;
  border-radius: 4px;
  background: #c9c9c9;
}
.lf,
.rt {
  position: absolute;
  top: 3px;
  width: 0;
  height: 0;
  border: 4px solid transparent;
}
.lf {
  left: 3px;
  border-right: 4px solid #222;
  border-left: 0;
}
.rt {
  right: 18px;
  border-left: 4px solid #222;
  border-right: 0;
}

.splitter {
  position: relative;
  flex: none;
  width: 4px;
  background: #fff;
}
.splitter i {
  position: absolute;
  left: 0;
  top: 371px;
  width: 4px;
  height: 100px;
  background: #5a5e64;
}

/* canvas */
.canvas {
  position: relative;
  flex: none;
  width: 1173px;
  height: 842px;
  background: #000;
  overflow: hidden;
}
.cad {
  display: block;
}
.cad-text text {
  font: 16px 'Liberation Sans', sans-serif;
  fill: #fff;
}
.cad .ax {
  font: 16px 'Liberation Sans', sans-serif;
}
.cube-label {
  font: bold 8px 'Liberation Sans', sans-serif;
  fill: #1e2126;
}
.view-bar {
  position: absolute;
  right: 0;
  top: 1px;
  width: 32px;
  height: 238px;
  padding-top: 9px;
  box-sizing: border-box;
  display: flex;
  flex-direction: column;
  align-items: center;
  background: #43474c;
  border-radius: 4px 0 0 4px;
}
.view-btn {
  position: relative;
  flex: none;
  width: 26px;
  height: 39px;
}
.view-btn.sphere {
  height: 31px;
}
.view-btn.cube3d {
  height: 30px;
}
.view-caret {
  position: absolute;
  left: 10px;
  top: 28px;
  border: 3px solid transparent;
  border-top: 3px solid #23262a;
  border-bottom: 0;
}
.view-list {
  margin-top: 3px;
  padding-top: 7px;
  border-top: 1px solid #23262a;
}

/* right panel */
.side {
  position: relative;
  flex: 1;
  display: flex;
  flex-direction: column;
  box-sizing: border-box;
  background: #efefef;
  border-left: 1px solid #c3c5c8;
  border-bottom: 1px solid #c3c5c8;
}
.side-strip {
  flex: none;
  height: 10px;
  display: flex;
  justify-content: flex-end;
  padding-right: 3px;
  background: #d3d5d9;
  margin-top: 1px;
}
.side-title {
  flex: none;
  display: flex;
  align-items: center;
  height: 22px;
  padding: 3px 0 0 8px;
  color: #666;
  border-bottom: 1px solid #d0d0d0;
  box-sizing: border-box;
  margin-bottom: 6px;
}
.side-tabs {
  flex: none;
  display: flex;
  height: 24px;
  padding-left: 2px;
}
.stab {
  display: flex;
  align-items: center;
  justify-content: center;
  width: 60px;
  margin-right: 1px;
  padding-top: 2px;
  box-sizing: border-box;
  color: #777;
  background: #dedfe0;
  border-radius: 3px 3px 0 0;
}
.stab.active {
  width: 62px;
  color: #3b8fe8;
  background: #fff;
}
.layer-wrap {
  flex: none;
  display: flex;
  height: 736px;
  margin-left: 2px;
  margin-top: 3px;
}
.layer-table {
  width: 244px;
  border-left: 1px solid #c9cacc;
  border-bottom: 1px solid #c9cacc;
  background: #fff;
}
.lr {
  display: grid;
  grid-template-columns: 118px 63px 63px;
  height: 21px;
  box-sizing: border-box;
  border-bottom: 1px solid #c9cacc;
}
.lhead {
  background: #eeeeee;
}
.lhead > span {
  padding-top: 2px;
}
.lc,
.lc-name {
  display: flex;
  align-items: center;
  box-sizing: border-box;
  border-right: 1px solid #c9cacc;
}
.lc {
  justify-content: center;
  padding-top: 1px;
}
.center {
  justify-content: center;
}
.act {
  background: #6aa9f2;
  color: #fff;
}
.focus {
  box-shadow: inset 0 0 0 2px #6aa9f2;
}
.cb {
  flex: none;
  width: 13px;
  height: 13px;
  box-sizing: border-box;
  border: 1px solid #8c8c8c;
  border-radius: 2px;
}
.cb.dis {
  background: #eeeeee;
  border-color: #bdbdbd;
}
.cb.yes {
  position: relative;
  border-color: #5aa0f2;
  background: #5aa0f2;
}
.cb.yes::after {
  content: '';
  position: absolute;
  left: 3px;
  top: 1px;
  width: 3px;
  height: 6px;
  border: solid #fff;
  border-width: 0 2px 2px 0;
  transform: rotate(45deg);
}
.cb.part {
  background: #6aa9f2;
  box-shadow: inset 0 0 0 1px #fff;
}
.minus {
  flex: none;
  width: 14px;
  height: 14px;
  box-sizing: border-box;
  border: 1px solid #b5b5b5;
  border-radius: 2px;
  background: linear-gradient(#222, #222) center/6px 1px no-repeat, #f0f0f0;
}
.m0 {
  margin-left: 2px;
}
.g1 {
  flex: none;
  align-self: stretch;
  width: 10px;
  margin-left: 9px;
  box-sizing: border-box;
  border-left: 1px solid #c9cacc;
}
.g1.short {
  width: 3px;
}
.g2 {
  flex: none;
  align-self: stretch;
  width: 17px;
  box-sizing: border-box;
  border-left: 1px solid #c9cacc;
  background: linear-gradient(#c9cacc, #c9cacc) center/100% 1px no-repeat;
}
.g2.last {
  align-self: flex-start;
  height: 11px;
  background: none;
  border-bottom: 1px solid #c9cacc;
}
.lname {
  margin-left: 5px;
  padding-top: 3px;
}
.side-scroll {
  flex: none;
  position: relative;
  width: 16px;
  background: #fff;
}
.sknob {
  position: absolute;
  left: 3px;
  top: 9px;
  width: 8px;
  height: 255px;
  border-radius: 4px;
  background: #c9c9c9;
}
.side-foot {
  flex: 1;
  display: flex;
  justify-content: flex-end;
  padding: 7px 8px 0 0;
}
.reset {
  display: flex;
  align-items: center;
  justify-content: center;
  width: 90px;
  height: 25px;
  box-sizing: border-box;
  padding-top: 2px;
  color: #555;
  background: #fafafa;
  border: 1px solid #ccd3dc;
  border-radius: 3px;
}
.meter {
  position: absolute;
  right: 0;
  top: 593px;
  width: 10px;
  height: 58px;
  border-radius: 4px 0 0 4px;
  background: linear-gradient(#0000 30%, #d8dc7a 30% 70%, #7ad8c0 70% 90%, #0000 90%) center/4px 100% no-repeat, #555a62;
}
.mark {
  position: absolute;
  box-sizing: border-box;
  border-style: solid;
  border-color: #ff3b3b;
  pointer-events: none;
}
.mark-side {
  left: 1644px;
  top: 0;
  width: 79px;
  height: 74px;
  border-width: 6px 7px 8px 8px;
}
.mark-view {
  left: 1605px;
  top: 189px;
  width: 45px;
  height: 40px;
  border-width: 7px 6px 8px 7px;
}

/* status */
.status {
  flex: none;
  display: flex;
  align-items: center;
  height: 32px;
  box-sizing: border-box;
  background: #dedfe1;
  border-bottom: 2px solid #5a6672;
  color: #444;
}
.st {
  flex: none;
  white-space: nowrap;
  padding-top: 3px;
}
.s1 {
  width: 200px;
  margin-left: -1px;
}
.s2 {
  width: 84px;
}
.s3 {
  width: 135px;
}
.s4 {
  width: 100px;
}
.s5 {
  width: 80px;
}
.sbtn {
  flex: none;
  display: inline-flex;
  align-items: center;
  justify-content: center;
  height: 24px;
  margin-right: 3px;
  box-sizing: border-box;
  background: #c8cacc;
  border: 1px solid #a8aaad;
}
.sbtn .caret {
  margin-left: 3px;
}
.picked {
  background: #fff;
  border: 1px solid #3b8fe8;
}
.text {
  color: #444;
}
.w25 {
  width: 25px;
}
.w36 {
  width: 36px;
}
.w73 {
  width: 73px;
}
.w60 {
  width: 60px;
}
.hint {
  width: 923px;
  color: #333;
}
.fps {
  color: #333;
}
</style>

<style>
html,
body {
  margin: 0;
  background: #fff;
}
</style>
